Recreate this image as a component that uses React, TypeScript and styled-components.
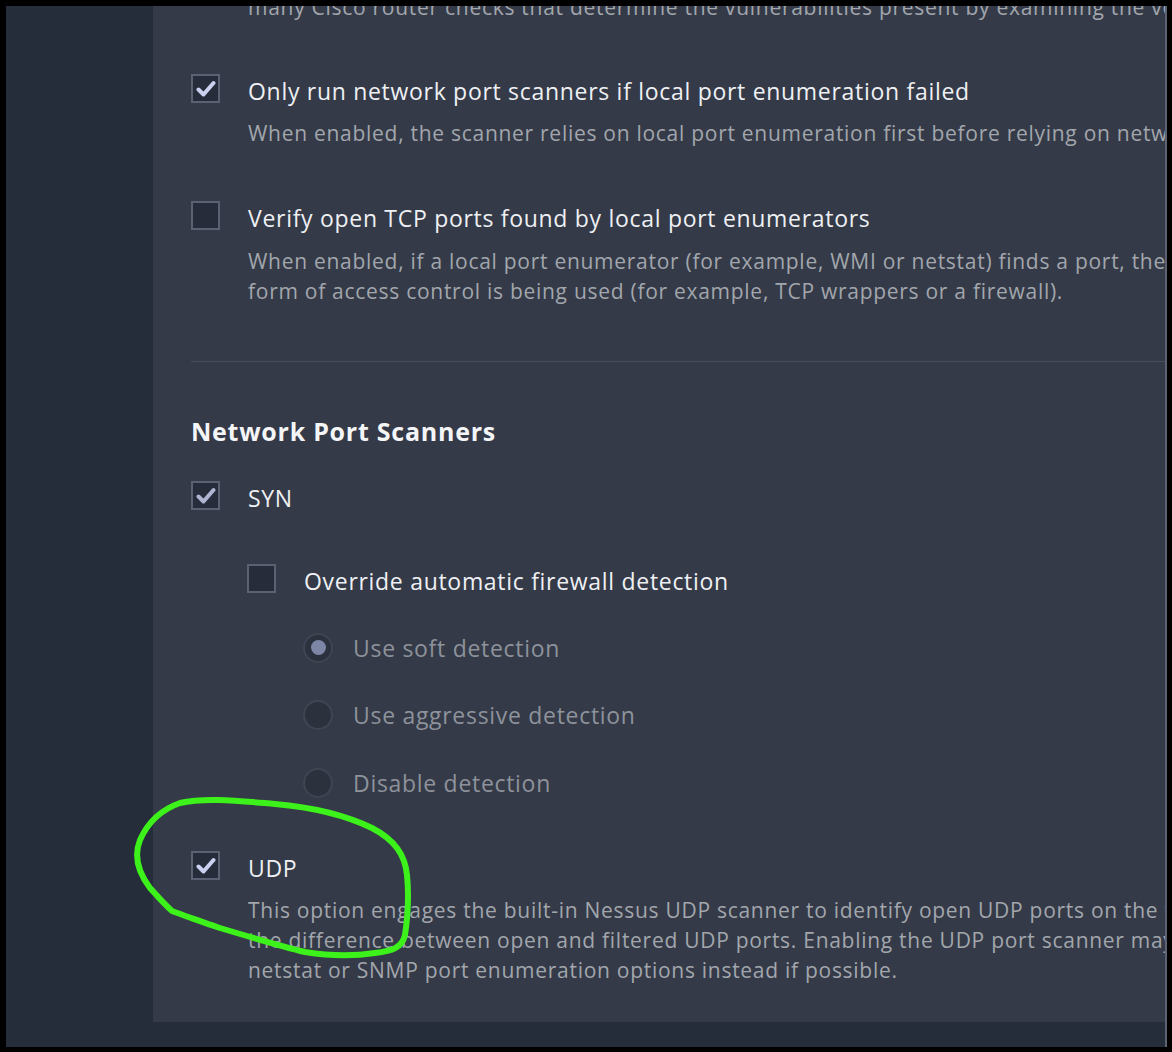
import React from "react";
import styled, { createGlobalStyle } from "styled-components";

const Global = createGlobalStyle`
  html, body { margin: 0; padding: 0; background: #000; }
  body { font-family: "Open Sans", "Noto Sans", sans-serif; }
  #root { width: 1172px; height: 1052px; overflow: hidden; }
`;

const Frame = styled.div`
  position: relative;
  box-sizing: border-box;
  width: 1172px;
  height: 1052px;
  padding: 6px 5px 5px 6px;
  background: #000;
`;

const Screen = styled.div`
  box-sizing: border-box;
  height: 100%;
  display: flex;
  background: #252c3a;
  border-right: 2px solid #5c6271;
  overflow: hidden;
`;

const Sidebar = styled.aside`
  width: 147px;
  flex: none;
  background: #252c3a;
`;

const Main = styled.main`
  flex: 1;
  display: flex;
  flex-direction: column;
  min-width: 0;
`;

const Panel = styled.section`
  box-sizing: border-box;
  height: 1016px;
  flex: none;
  background: #343a47;
  padding: 0 0 0 38px;
  overflow: hidden;
`;

const Content = styled.div`
  margin-top: -14px;
  width: 1500px;
`;

const Option = styled.div<{ $indent?: boolean; $mt: number }>`
  display: grid;
  grid-template-columns: 57px 1fr;
  margin-top: ${(p) => p.$mt}px;
  margin-left: ${(p) => (p.$indent ? 56 : 0)}px;
`;

const BoxCell = styled.div`
  height: 30px;
  display: flex;
  align-items: flex-start;
`;

const Box = styled.span`
  box-sizing: border-box;
  width: 29px;
  height: 29px;
  margin-top: -2px;
  border: 2px solid #596172;
  background: #262c39;
  display: flex;
  align-items: center;
  justify-content: center;
`;

const Label = styled.div`
  font-size: 23px;
  letter-spacing: 0.7px;
  line-height: 30px;
  color: #eef0f4;
  white-space: nowrap;
`;

const Desc = styled.div<{ $mt?: number }>`
  grid-column: 2;
  margin-top: ${(p) => p.$mt ?? 12}px;
  font-size: 21px;
  letter-spacing: 0.72px;
  line-height: 30px;
  color: #a2a6ad;
`;

const Line = styled.div`
  white-space: nowrap;
`;

const TopLine = styled.div`
  margin-left: 57px;
  font-size: 21px;
  letter-spacing: 0.72px;
  line-height: 30px;
  color: #a2a6ad;
  white-space: nowrap;
`;

const Divider = styled.hr`
  margin: 55px 0 0 0;
  border: 0;
  height: 1px;
  background: #474e5b;
`;

const Heading = styled.h2`
  margin: 53px 0 0 0;
  font-size: 25px;
  letter-spacing: 0.75px;
  line-height: 32px;
  font-weight: 700;
  color: #f4f5f7;
`;

const RadioRow = styled.div<{ $mt: number }>`
  display: flex;
  align-items: center;
  gap: 20px;
  margin-top: ${(p) => p.$mt}px;
  margin-left: 112px;
  height: 30px;
`;

const Radio = styled.span`
  box-sizing: border-box;
  width: 30px;
  height: 30px;
  margin-top: -1px;
  border-radius: 50%;
  border: 2px solid #3e4553;
  background: #2b313d;
  display: flex;
  align-items: center;
  justify-content: center;
`;

const Dot = styled.span`
  width: 15px;
  height: 15px;
  border-radius: 50%;
  background: #7d86a5;
`;

const RadioLabel = styled.span`
  font-size: 23px;
  letter-spacing: 0.7px;
  line-height: 30px;
  color: #8d929b;
  white-space: nowrap;
`;

const Footer = styled.div`
  flex: 1;
  background: #252c3a;
`;

const Annotation = styled.svg`
  position: absolute;
  left: 0;
  top: 0;
  pointer-events: none;
`;

const Check = ({ color = "#c9d0f0" }: { color?: string }) => (
  <svg width="20" height="18" viewBox="0 0 20 18">
    <path d="M2.5 9.5 L7.5 14.5 L17.5 3" fill="none" stroke={color} strokeWidth="4" strokeLinecap="round" strokeLinejoin="round" />
  </svg>
);

type CbProps = { checked?: boolean; checkColor?: string };
const CheckBox = ({ checked, checkColor }: CbProps) => (
  <BoxCell>
    <Box>{checked && <Check color={checkColor} />}</Box>
  </BoxCell>
);

export default function App() {
  return (
    <>
      <Global />
      <Frame>
        <Screen>
          <Sidebar />
          <Main>
            <Panel>
              <Content>
                <TopLine>many Cisco router checks that determine the vulnerabilities present by examining the version and</TopLine>

                <Option $mt={54}>
                  <CheckBox checked />
                  <Label>Only run network port scanners if local port enumeration failed</Label>
                  <Desc>
                    <Line>When enabled, the scanner relies on local port enumeration first before relying on network port scans.</Line>
                  </Desc>
                </Option>

                <Option $mt={55}>
                  <CheckBox />
                  <Label>Verify open TCP ports found by local port enumerators</Label>
                  <Desc $mt={13}>
                    <Line>When enabled, if a local port enumerator (for example, WMI or netstat) finds a port, the scanner also verifies</Line>
                    <Line>form of access control is being used (for example, TCP wrappers or a firewall).</Line>
                  </Desc>
                </Option>

                <Divider />

                <Heading>Network Port Scanners</Heading>

                <Option $mt={36}>
                  <CheckBox checked checkColor="#aeb5d2" />
                  <Label>SYN</Label>
                </Option>

                <Option $mt={53} $indent>
                  <CheckBox />
                  <Label>Override automatic firewall detection</Label>
                </Option>

                <RadioRow $mt={37}>
                  <Radio><Dot /></Radio>
                  <RadioLabel>Use soft detection</RadioLabel>
                </RadioRow>
                <RadioRow $mt={37}>
                  <Radio />
                  <RadioLabel>Use aggressive detection</RadioLabel>
                </RadioRow>
                <RadioRow $mt={38}>
                  <Radio />
                  <RadioLabel>Disable detection</RadioLabel>
                </RadioRow>

                <Option $mt={55}>
                  <CheckBox checked />
                  <Label>UDP</Label>
                  <Desc>
                    <Line>This option engages the built-in Nessus UDP scanner to identify open UDP ports on the targets. Due to the nature</Line>
                    <Line>the difference between open and filtered UDP ports. Enabling the UDP port scanner may dramatically increase</Line>
                    <Line>netstat or SNMP port enumeration options instead if possible.</Line>
                  </Desc>
                </Option>
              </Content>
            </Panel>
            <Footer />
          </Main>
        </Screen>
        <Annotation width="1172" height="1052" viewBox="0 0 1172 1052">
          <path
            d="M172 911 C165 905 158 897 150 888 C138 872 134 855 140 840 C148 822 160 810 180 803 C205 797 240 801 275 804 C310 807 345 815 372 828 C395 840 405 855 407 875 C409 895 408 915 405 935 C402 948 392 951 375 953 C355 956 330 956 305 952 C280 946 250 937 220 928 C200 921 185 916 172 911 Z"
            fill="none"
            stroke="#3cf21a"
            strokeWidth="6"
            strokeLinecap="round"
            strokeLinejoin="round"
          />
        </Annotation>
      </Frame>
    </>
  );
}
